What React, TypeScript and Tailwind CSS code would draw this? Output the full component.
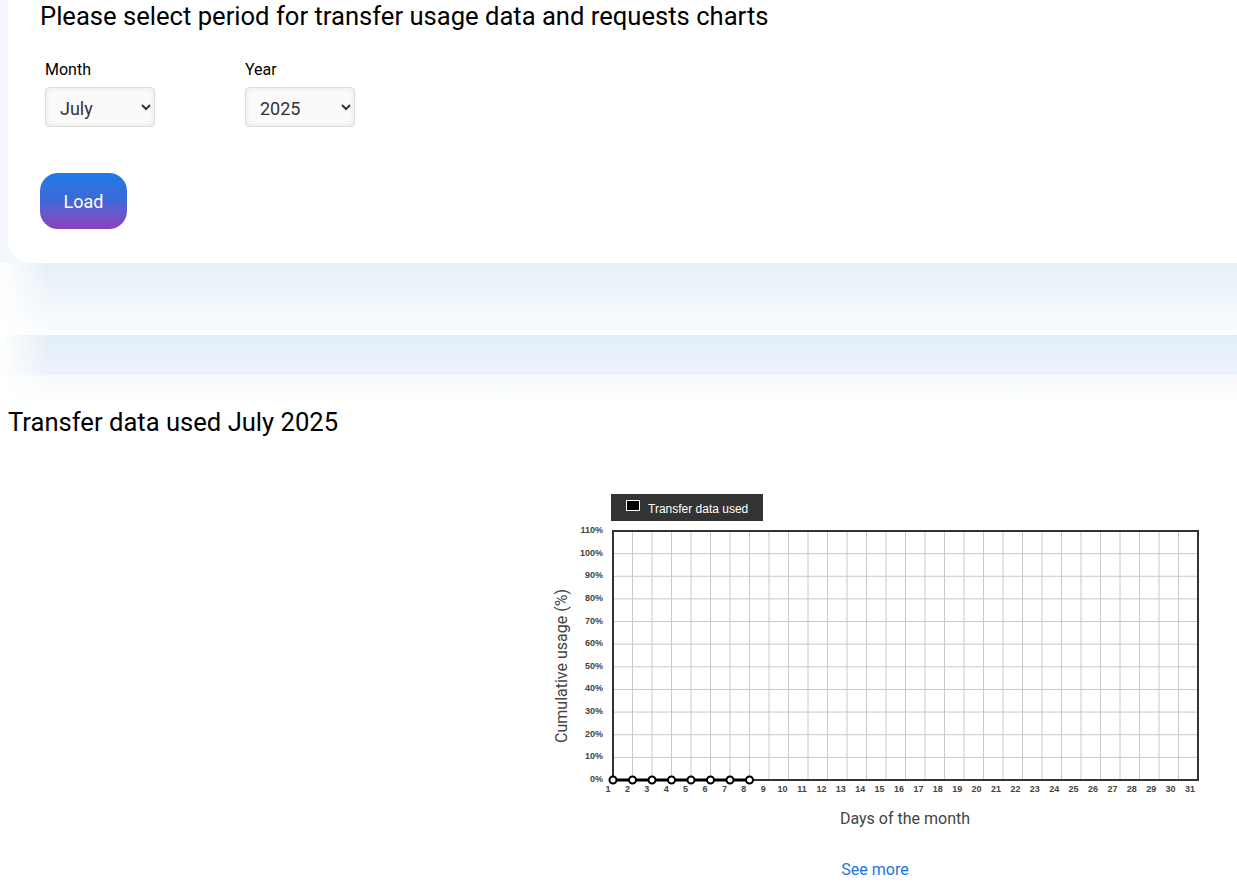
import React from "react";

const yTicks = [0, 10, 20, 30, 40, 50, 60, 70, 80, 90, 100, 110];
const days = Array.from({ length: 31 }, (_, i) => i + 1);
const usage = [0, 0, 0, 0, 0, 0, 0, 0];

const L = 63;
const R = 648;
const T = 41;
const B = 290;
const dx = (R - L) / 30;
const dy = (B - T) / 11;

function UsageChart() {
  return (
    <svg width="660" height="340" viewBox="0 0 660 340" className="block">
      {/* legend */}
      <rect x="61" y="4" width="152" height="27" fill="#333" />
      <rect x="76.5" y="10.5" width="13" height="10" fill="#000" stroke="#fff" strokeWidth="1" />
      <text x="98" y="22.5" fill="#fff" fontSize="12" fontFamily="'Liberation Sans', Arial, sans-serif">
        Transfer data used
      </text>

      {/* grid */}
      {days.map((d) => (
        <line key={"v" + d} x1={L + (d - 1) * dx} y1={T} x2={L + (d - 1) * dx} y2={B} stroke="#c8c8c8" strokeWidth="1" />
      ))}
      {yTicks.map((v) => (
        <line key={"h" + v} x1={L} y1={B - (v / 10) * dy} x2={R} y2={B - (v / 10) * dy} stroke="#c8c8c8" strokeWidth="1" />
      ))}
      <rect x={L} y={T} width={R - L} height={B - T} fill="none" stroke="#333" strokeWidth="2" />

      {/* y labels */}
      {yTicks.map((v) => (
        <text
          key={"yl" + v}
          x="53"
          y={B - (v / 10) * dy + 2}
          textAnchor="end"
          fontSize="9"
          fontWeight="bold"
          fill="#444"
          fontFamily="'Liberation Sans', Arial, sans-serif"
        >
          {v}%
        </text>
      ))}

      {/* x labels */}
      {days.map((d) => (
        <text
          key={"xl" + d}
          x={58 + (d - 1) * 19.4}
          y="302"
          textAnchor="middle"
          fontSize="9"
          fontWeight="bold"
          fill="#444"
          fontFamily="'Liberation Sans', Arial, sans-serif"
        >
          {d}
        </text>
      ))}

      {/* data */}
      <polyline
        points={usage.map((u, i) => `${L + i * dx},${B - u}`).join(" ")}
        fill="none"
        stroke="#000"
        strokeWidth="3"
      />
      {usage.map((u, i) => (
        <circle key={"p" + i} cx={L + i * dx} cy={B - u} r="3.5" fill="#fff" stroke="#000" strokeWidth="2" />
      ))}

      <text
        x="11"
        y="176"
        transform="rotate(-90 11 176)"
        textAnchor="middle"
        dominantBaseline="central"
        fontSize="16"
        fill="#444"
        fontFamily="Roboto, sans-serif"
      >
        Cumulative usage (%)
      </text>
      <text x="355" y="334" textAnchor="middle" fontSize="16" fill="#444" fontFamily="Roboto, sans-serif">
        Days of the month
      </text>
    </svg>
  );
}

export default function App() {
  return (
    <div className="min-h-screen bg-white font-['Roboto',sans-serif] text-black">
      <div className="bg-[#f4f8fc] pl-2">
        <div className="h-[263px] bg-white rounded-bl-[22px] pl-8">
          <h1 className="text-[25.6px] leading-[32px] m-0">
            Please select period for transfer usage data and requests charts
          </h1>
          <div className="flex gap-[90px] pl-[5px] mt-[28px]">
            <label className="flex flex-col">
              <span className="text-base leading-5">Month</span>
              <select
                defaultValue="July"
                className="mt-[7px] w-[110px] h-10 pl-[10px] pr-2 pt-[2px] text-lg text-[#333] rounded border border-[#ddd] bg-[#fafafa] shadow-[inset_0_0_6px_rgba(0,0,0,0.08)]"
              >
                <option>July</option>
              </select>
            </label>
            <label className="flex flex-col">
              <span className="text-base leading-5">Year</span>
              <select
                defaultValue="2025"
                className="mt-[7px] w-[110px] h-10 pl-[10px] pr-2 pt-[2px] text-lg text-[#333] rounded border border-[#ddd] bg-[#fafafa] shadow-[inset_0_0_6px_rgba(0,0,0,0.08)]"
              >
                <option>2025</option>
              </select>
            </label>
          </div>
          <button className="mt-[46px] w-[87px] h-14 pt-[2px] rounded-[18px] bg-gradient-to-b from-[#1a7be8] via-[#3c67d8] to-[#8a3fbe] text-white text-lg">
            Load
          </button>
        </div>
      </div>

      <div className="relative">
        <div className="h-[72px] bg-gradient-to-b from-[#e5eff8] to-[#fbfdfe]" />
        <div className="h-[40px] bg-gradient-to-b from-[#e2eef8] to-[#ecf3fb]" />
        <div className="h-[30px] bg-gradient-to-b from-[#f6fafd] to-white" />
        <div className="absolute inset-y-0 left-0 w-12 bg-gradient-to-r from-white to-transparent" />
      </div>

      <h2 className="pl-2 pt-[3px] text-[25.6px] leading-7 m-0">Transfer data used July 2025</h2>

      <div className="pl-[550px] mt-[54px]">
        <UsageChart />
        <div className="w-[650px] text-center mt-[28px]">
          <a className="text-[#1a73e8] text-base">See more</a>
        </div>
      </div>
    </div>
  );
}
